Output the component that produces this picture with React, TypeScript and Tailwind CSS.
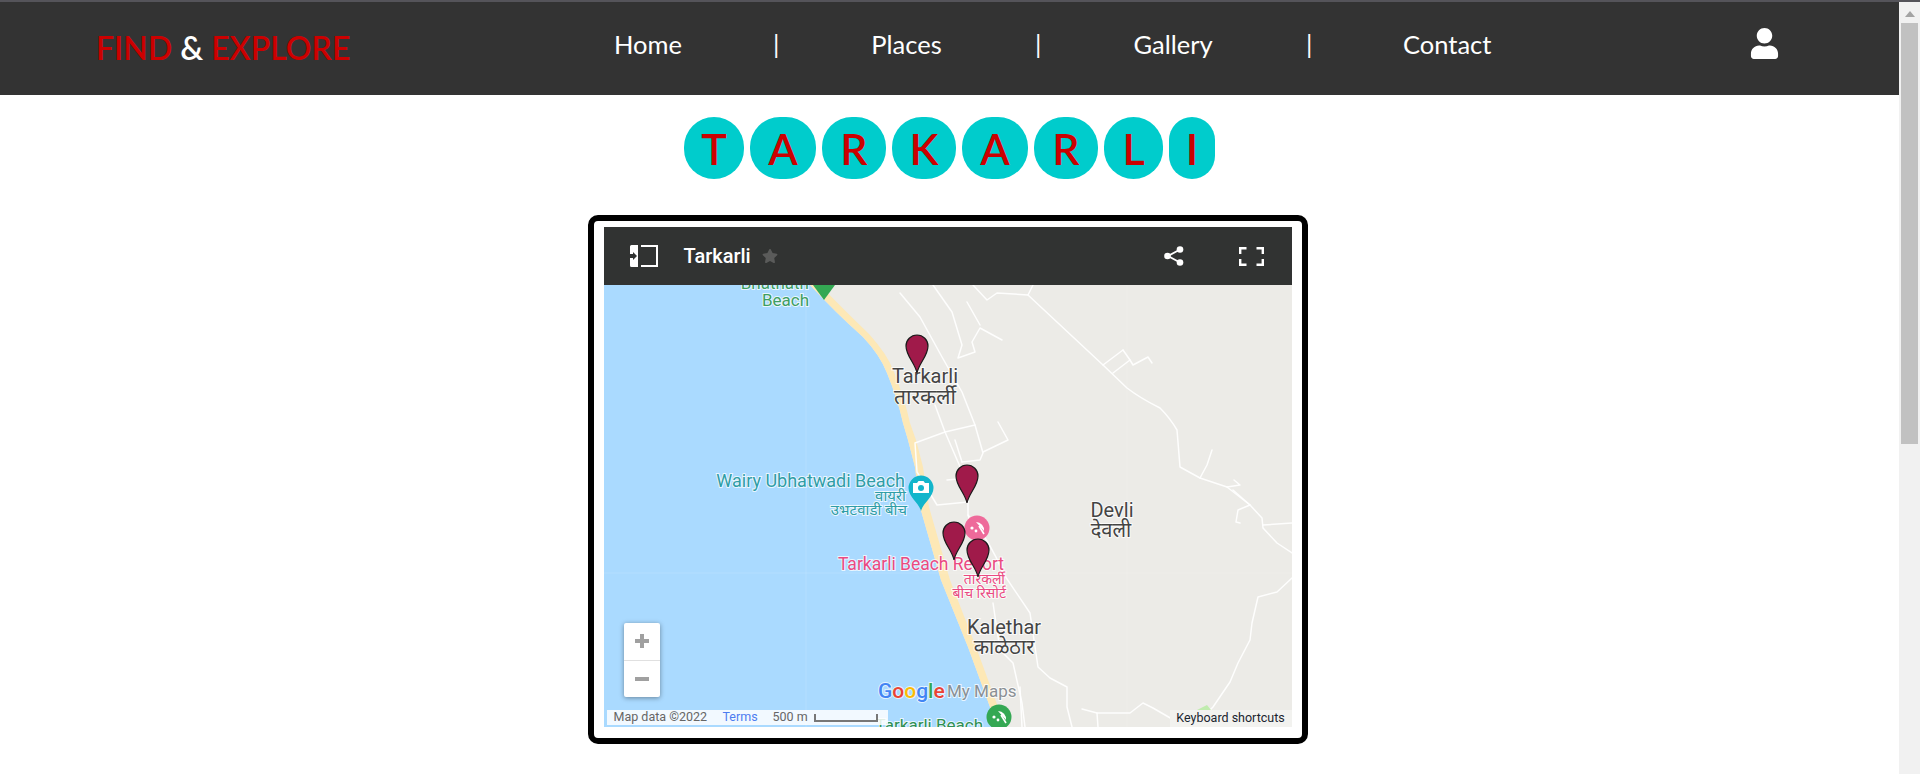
import React from "react"
import { FaStar, FaUser } from "react-icons/fa"

const chips = [
  { letter: "T", width: "w-[60px]" },
  { letter: "A", width: "w-[66px]" },
  { letter: "R", width: "w-[64px]" },
  { letter: "K", width: "w-[64px]" },
  { letter: "A", width: "w-[66px]" },
  { letter: "R", width: "w-[64px]" },
  { letter: "L", width: "w-[59px]" },
  { letter: "I", width: "w-[46px]" },
]

const roads = [
  "M1028 295 L1103 365 L1127 388 Q1140 398 1160 408 Q1170 418 1177 430 L1180 467 L1200 478 L1227 487 L1250 505 L1262 518 L1263 528 L1277 543 L1292 553",
  "M1292 578 L1277 592 L1258 597 L1252 623 L1250 640 L1238 663 L1230 682 L1213 707 L1200 720",
  "M1082 709 L1097 713 L1130 713 L1143 703 L1153 708 L1172 719",
  "M1003 573 L1030 613 L1038 667 L1050 678 L1067 687 L1067 707 L1072 727",
  "M1097 713 L1098 727",
  "M900 293 L920 317 L942 357 L962 392 L975 425 L983 453 L980 460 L962 462",
  "M933 285 L952 312 L962 345 L958 358 L975 352 L972 342 L980 328 L1002 340",
  "M967 302 L980 325",
  "M973 285 L987 300 L997 293 L1028 295 L1033 285",
  "M935 405 L945 432 L958 462 L968 485 L968 515 L975 540",
  "M945 432 L975 425",
  "M945 432 L915 443 L917 472 L937 505 L968 502",
  "M983 452 L1008 440 L998 422",
  "M1113 373 L1130 360 L1133 365 L1148 357 L1152 363",
  "M1123 350 L1130 360",
  "M1103 365 L1123 350",
  "M955 440 L962 462",
  "M947 480 L968 478",
  "M993 603 L1000 650 L1013 663 L1022 703 L1025 727",
  "M968 515 Q990 540 1003 573",
  "M1020 687 L1022 727",
  "M1233 490 L1250 505",
  "M1250 505 L1238 510 L1236 522 L1240 523",
  "M1263 525 L1292 523",
  "M1200 478 L1207 465 L1212 450",
  "M1227 487 L1240 485 L1234 480",
]

const pins = [
  { x: 917, y: 373 },
  { x: 967, y: 503 },
  { x: 954, y: 560 },
  { x: 978, y: 577 },
]

function MapLabel({ x, y, size, color, anchor, children }: { x: number, y: number, size: number, color: string, anchor?: "start" | "end" | "middle", children: React.ReactNode }) {
  return (
    <text
      x={x}
      y={y}
      fontSize={size}
      fill={color}
      textAnchor={anchor ?? "start"}
      stroke="#ffffff"
      strokeOpacity={0.75}
      strokeWidth={2}
      paintOrder="stroke"
      className="font-['Roboto','Noto_Sans_Devanagari','Noto_Sans',sans-serif]"
    >
      {children}
    </text>
  )
}

function Umbrella({ x, y, fill }: { x: number, y: number, fill: string }) {
  return (
    <g transform={`translate(${x} ${y})`}>
      <circle r="12.5" fill={fill} />
      <path d="M-1 -6 A8 8 0 0 1 7 3 Z" fill="#ffffff" />
      <path d="M2 -2 L7 6" stroke="#ffffff" strokeWidth="1.6" />
      <circle cx="-5" cy="0" r="1.6" fill="#ffffff" />
      <circle cx="-1" cy="3" r="1.4" fill="#ffffff" />
    </g>
  )
}

function MapCanvas() {
  return (
    <svg viewBox="604 285 688 442" className="block w-full h-full">
      <rect x="604" y="285" width="688" height="442" fill="#ecebe7" />
      <path d="M604 285 H810 Q835 312 863 337 Q880 355 887 373 Q898 400 903 423 L908 440 L915 467 L920 507 L941 580 L968 647 L990 707 L997 727 H604 Z" fill="#aadaff" />
      <path d="M810 285 H820 Q842 308 869 334 Q888 355 894 372 Q905 400 910 423 L916 440 L923 467 L929 507 L950 580 L976 647 L998 707 L1005 727 H997 L990 707 L968 647 L941 580 L920 507 L915 467 L908 440 L903 423 Q898 400 887 373 Q880 355 863 337 Q835 312 810 285 Z" fill="#fde8b6" />
      <path d="M806 285 V727 M604 573 H1292 M1127 285 V727" stroke="#ffffff" strokeOpacity="0.12" fill="none" />

      {roads.map((d, i) => (
        <path key={i} d={d} fill="none" stroke="#ffffff" strokeWidth="1.5" strokeOpacity="0.92" strokeLinejoin="round" strokeLinecap="round" />
      ))}
      <polygon points="1197,710 1207,705 1211,710" fill="#c0ecae" />

      <path d="M813 285 H835 L824 300 Z" fill="#34a853" />
      <MapLabel x={809} y={289} size={17} color="#3d9e62" anchor="end">Bhathath</MapLabel>
      <MapLabel x={809} y={306} size={17} color="#3d9e62" anchor="end">Beach</MapLabel>

      <MapLabel x={925} y={383} size={20} color="#444444" anchor="middle">Tarkarli</MapLabel>
      <MapLabel x={925} y={404} size={21} color="#444444" anchor="middle">तारकर्ली</MapLabel>

      <MapLabel x={905} y={487} size={18} color="#2f9da6" anchor="end">Wairy Ubhatwadi Beach</MapLabel>
      <MapLabel x={906} y={501} size={15} color="#2f9da6" anchor="end">वायरी</MapLabel>
      <MapLabel x={907} y={515} size={15} color="#2f9da6" anchor="end">उभटवाडी बीच</MapLabel>

      <path d="M921 511 C919 503 908.5 497 908.5 488 A12.5 12.5 0 1 1 933.5 488 C933.5 497 923 503 921 511 Z" fill="#12b5cb" />
      <path d="M913 483 H917 L918.5 481 H923.5 L925 483 H929 V493 H913 Z" fill="#ffffff" />
      <circle cx="921" cy="488" r="3" fill="#12b5cb" />

      <Umbrella x={977} y={528} fill="#ee6a9a" />
      <MapLabel x={1004} y={570} size={17.5} color="#ea4a82" anchor="end">Tarkarli Beach Resort</MapLabel>
      <MapLabel x={1005} y={584} size={14} color="#ea4a82" anchor="end">तारकर्ली</MapLabel>
      <MapLabel x={1006} y={598} size={14} color="#ea4a82" anchor="end">बीच रिसोर्ट</MapLabel>

      <MapLabel x={1004} y={634} size={20} color="#444444" anchor="middle">Kalethar</MapLabel>
      <MapLabel x={1004} y={654} size={20} color="#444444" anchor="middle">काळेठार</MapLabel>
      <MapLabel x={1112} y={517} size={20} color="#444444" anchor="middle">Devli</MapLabel>
      <MapLabel x={1111} y={537} size={20} color="#444444" anchor="middle">देवली</MapLabel>

      <MapLabel x={983} y={731} size={17} color="#2f8f52" anchor="end">Tarkarli Beach</MapLabel>
      <Umbrella x={999} y={717} fill="#34a853" />

      {pins.map((p) => (
        <path
          key={p.x}
          transform={`translate(${p.x} ${p.y})`}
          d="M0 0 C-2 -10 -11 -17 -11 -27 A11 11 0 1 1 11 -27 C11 -17 2 -10 0 0 Z"
          fill="#a01a4a"
          stroke="#1b1b1b"
          strokeWidth="1.2"
        />
      ))}

      <text x={878} y={698} fontSize={21} stroke="#ffffff" strokeOpacity={0.7} strokeWidth={2} paintOrder="stroke" className="font-['Roboto',sans-serif] font-medium">
        <tspan fill="#4285f4">G</tspan>
        <tspan fill="#ea4335">o</tspan>
        <tspan fill="#fbbc05">o</tspan>
        <tspan fill="#4285f4">g</tspan>
        <tspan fill="#34a853">l</tspan>
        <tspan fill="#ea4335">e</tspan>
      </text>
      <MapLabel x={947} y={697} size={17} color="#8a8f94">My Maps</MapLabel>
    </svg>
  )
}

function MapFrame() {
  return (
    <div className="self-center mr-1 mt-[36px] w-[720px] h-[529px] border-[6px] border-black rounded-[10px] px-[10px] pt-[6px] pb-[11px]">
      <div className="flex flex-col w-full h-[500px] font-['Roboto',sans-serif]">
        <div className="flex items-center h-[58px] shrink-0 bg-[#313332] pl-[26px] pr-[28px]">
          <svg width="28" height="24" viewBox="0 0 28 24" className="shrink-0">
            <path d="M1.5 1 H8 V23 H1.5 A1.5 1.5 0 0 1 0 21.5 V2.5 A1.5 1.5 0 0 1 1.5 1 Z" fill="#ffffff" />
            <path d="M0 10 H3 V8 L7 12 L3 16 V14 H0 Z" fill="#313332" />
            <path d="M11 2 H27 V22 H11" fill="none" stroke="#ffffff" strokeWidth="2" />
          </svg>
          <span className="ml-[26px] text-[20px] font-medium text-white">Tarkarli</span>
          <FaStar className="ml-[11px] text-[#5a5b5a] text-[16px]" />
          <svg width="20" height="20" viewBox="0 0 20 20" className="ml-auto shrink-0">
            <path d="M16 3.5 L4 10 L16 16.5" fill="none" stroke="#ffffff" strokeWidth="1.8" />
            <circle cx="16" cy="3.5" r="3.3" fill="#ffffff" />
            <circle cx="3.5" cy="10" r="3.3" fill="#ffffff" />
            <circle cx="16" cy="16.5" r="3.3" fill="#ffffff" />
          </svg>
          <svg width="25" height="19" viewBox="0 0 25 19" className="ml-[55px] shrink-0">
            <path d="M1.2 7 V1.2 H7.5 M17.5 1.2 H23.8 V7 M23.8 12 V17.8 H17.5 M7.5 17.8 H1.2 V12" fill="none" stroke="#ffffff" strokeWidth="2.4" />
          </svg>
        </div>
        <div className="relative flex-1 overflow-hidden">
          <MapCanvas />

          <div className="absolute left-[20px] top-[338px] w-[36px] h-[74px] flex flex-col bg-white rounded-[2px] shadow-[0_1px_5px_rgba(0,0,0,0.4)]">
            <div className="flex-1 flex items-center justify-center border-b border-[#e0e0e0] text-[#999999]">
              <svg width="14" height="14" viewBox="0 0 14 14"><path d="M0 7 H14 M7 0 V14" stroke="#a0a0a0" strokeWidth="4" /></svg>
            </div>
            <div className="flex-1 flex items-center justify-center">
              <svg width="14" height="14" viewBox="0 0 14 14"><path d="M0 7 H14" stroke="#a0a0a0" strokeWidth="4" /></svg>
            </div>
          </div>

          <div className="absolute left-[3px] bottom-[2px] w-[281px] h-[15px] flex items-center bg-white/85 text-[12.5px] leading-none text-[#666666] pl-[7px]">
            <span className="w-[109px]">Map data ©2022</span>
            <span className="w-[50px] text-[#4d7cf0]">Terms</span>
            <span className="w-[41px]">500 m</span>
            <span className="w-[64px] h-[8px] border-x-2 border-b-2 border-[#777777]" />
          </div>

          <div className="absolute right-0 bottom-0 w-[122px] h-[17px] flex items-center justify-center bg-[#f2f2ef] text-[12.5px] leading-none text-[#1a2530]">
            Keyboard shortcuts
          </div>
        </div>
      </div>
    </div>
  )
}

export default function App() {
  return (
    <div className="h-screen overflow-hidden flex flex-col bg-white font-[Lato,sans-serif]">
      <div className="h-[2px] shrink-0 bg-[#55545a]" />
      <div className="flex flex-1 min-h-0">
        <div className="flex-1 flex flex-col min-w-0">
          {/* Header */}
          <header className="flex items-center h-[93px] shrink-0 bg-[#333333] pl-[96px] text-white">
            <div className="w-[518px] pb-[1px] text-[32px] font-semibold text-[#cc0000] whitespace-nowrap">
              FIND <span className="text-white">&amp;</span> EXPLORE
            </div>
            <nav className="flex items-center gap-[92px] text-[25.5px] pb-[8px] text-center whitespace-nowrap">
              <span className="w-[67px]">Home</span>
              <span className="w-[5px]">|</span>
              <span className="w-[73px]">Places</span>
              <span className="w-[5px]">|</span>
              <span className="w-[82px]">Gallery</span>
              <span className="w-[5px]">|</span>
              <span className="w-[87px]">Contact</span>
            </nav>
            <FaUser className="ml-auto mr-[119px] mb-[11px] text-[31px]" />
          </header>

          {/* Title */}
          <div className="flex justify-center gap-[6px] mt-[22px]">
            {chips.map((c, i) => (
              <div key={i} className={`${c.width} h-[62px] flex items-center justify-center rounded-[30px] bg-[#00cccc] text-[#cc0000] text-[43px] font-semibold leading-none`}>
                {c.letter}
              </div>
            ))}
          </div>

          <MapFrame />
        </div>

        {/* Scrollbar */}
        <div className="w-[21px] shrink-0 flex flex-col items-center bg-[#f1f1f1]">
          <svg width="10" height="6" viewBox="0 0 10 6" className="mt-[9px]"><path d="M5 0 L10 6 H0 Z" fill="#a3a3a3" /></svg>
          <div className="mt-[6px] w-[17px] h-[421px] bg-[#c1c1c1]" />
        </div>
      </div>
    </div>
  )
}
